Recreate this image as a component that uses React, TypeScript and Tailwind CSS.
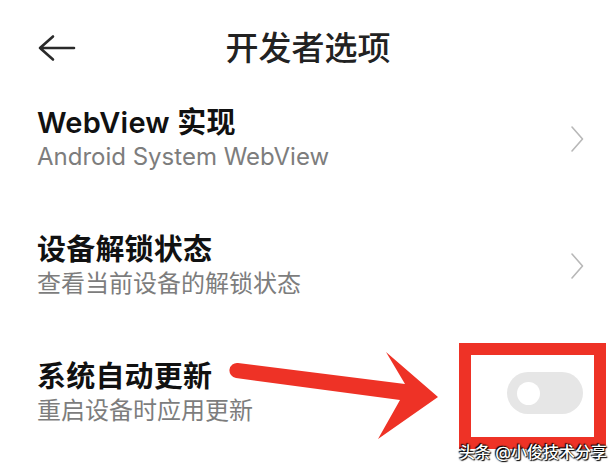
import React from "react";

const FONT = 'Inter, "Noto Sans CJK SC", sans-serif';

function Chevron() {
  return (
    <svg width="16" height="28" viewBox="0 0 16 28" className="shrink-0">
      <path d="M3 2 L13.5 14 L3 26" fill="none" stroke="#b8b8b8" strokeWidth="1.6" strokeLinecap="round" strokeLinejoin="round" />
    </svg>
  );
}

function Row({ title, sub, right }: { title: string; sub: string; right: React.ReactNode }) {
  return (
    <div className="flex items-center justify-between pl-[37px] pr-[31px]">
      <div className="flex flex-col">
        <div className="text-[29px] leading-[36px] font-semibold tracking-[0.2px] text-[#111]">{title}</div>
        <div className="text-[24px] leading-[32px] text-[#7d7d7d]">{sub}</div>
      </div>
      {right}
    </div>
  );
}

export default function App() {
  return (
    <div className="relative w-[616px] h-[472px] overflow-hidden bg-white" style={{ fontFamily: FONT }}>
      <div className="grid h-[96px] grid-cols-[1fr_auto_1fr] items-center">
        <div className="pl-[37px]">
          <svg width="40" height="30" viewBox="0 0 40 30">
            <path d="M3 15 H37 M16 3.5 L3 15 L16 26.5" fill="none" stroke="#2a2a2a" strokeWidth="2.6" strokeLinecap="round" strokeLinejoin="round" />
          </svg>
        </div>
        <div className="text-[33px] leading-[40px] font-medium text-[#222]">开发者选项</div>
        <div />
      </div>

      <div className="flex flex-col gap-[59px] pt-[9px]">
        <Row title="WebView 实现" sub="Android System WebView" right={<Chevron />} />
        <Row title="设备解锁状态" sub="查看当前设备的解锁状态" right={<Chevron />} />
        <Row
          title="系统自动更新"
          sub="重启设备时应用更新"
          right={
            <div className="mr-[2px] flex h-[42px] w-[76px] items-center rounded-full bg-[#e6e6e6] pl-[10px]">
              <div className="h-[23px] w-[23px] rounded-full bg-white" />
            </div>
          }
        />
      </div>

      {/* annotation: red box */}
      <div className="absolute left-[459px] top-[343px] h-[106px] w-[147px] border-[12px] border-[#ee3226]" />

      {/* annotation: red arrow */}
      <svg className="absolute left-0 top-0" width="616" height="472" viewBox="0 0 616 472">
        <path
          d="M238 363 L405 384 L386 352 L438 397 L378 439 L400 400 L236 378 A7.5 7.5 0 0 1 238 363 Z"
          fill="#ee3226"
        />
      </svg>

      <div className="absolute left-[459px] top-[441px] text-[16px] leading-[22px] font-medium text-white [text-shadow:0_0_2px_#000,1px_1px_1px_#000,-1px_-1px_1px_#000]">
        头条 @小俊技术分享
      </div>
    </div>
  );
}
